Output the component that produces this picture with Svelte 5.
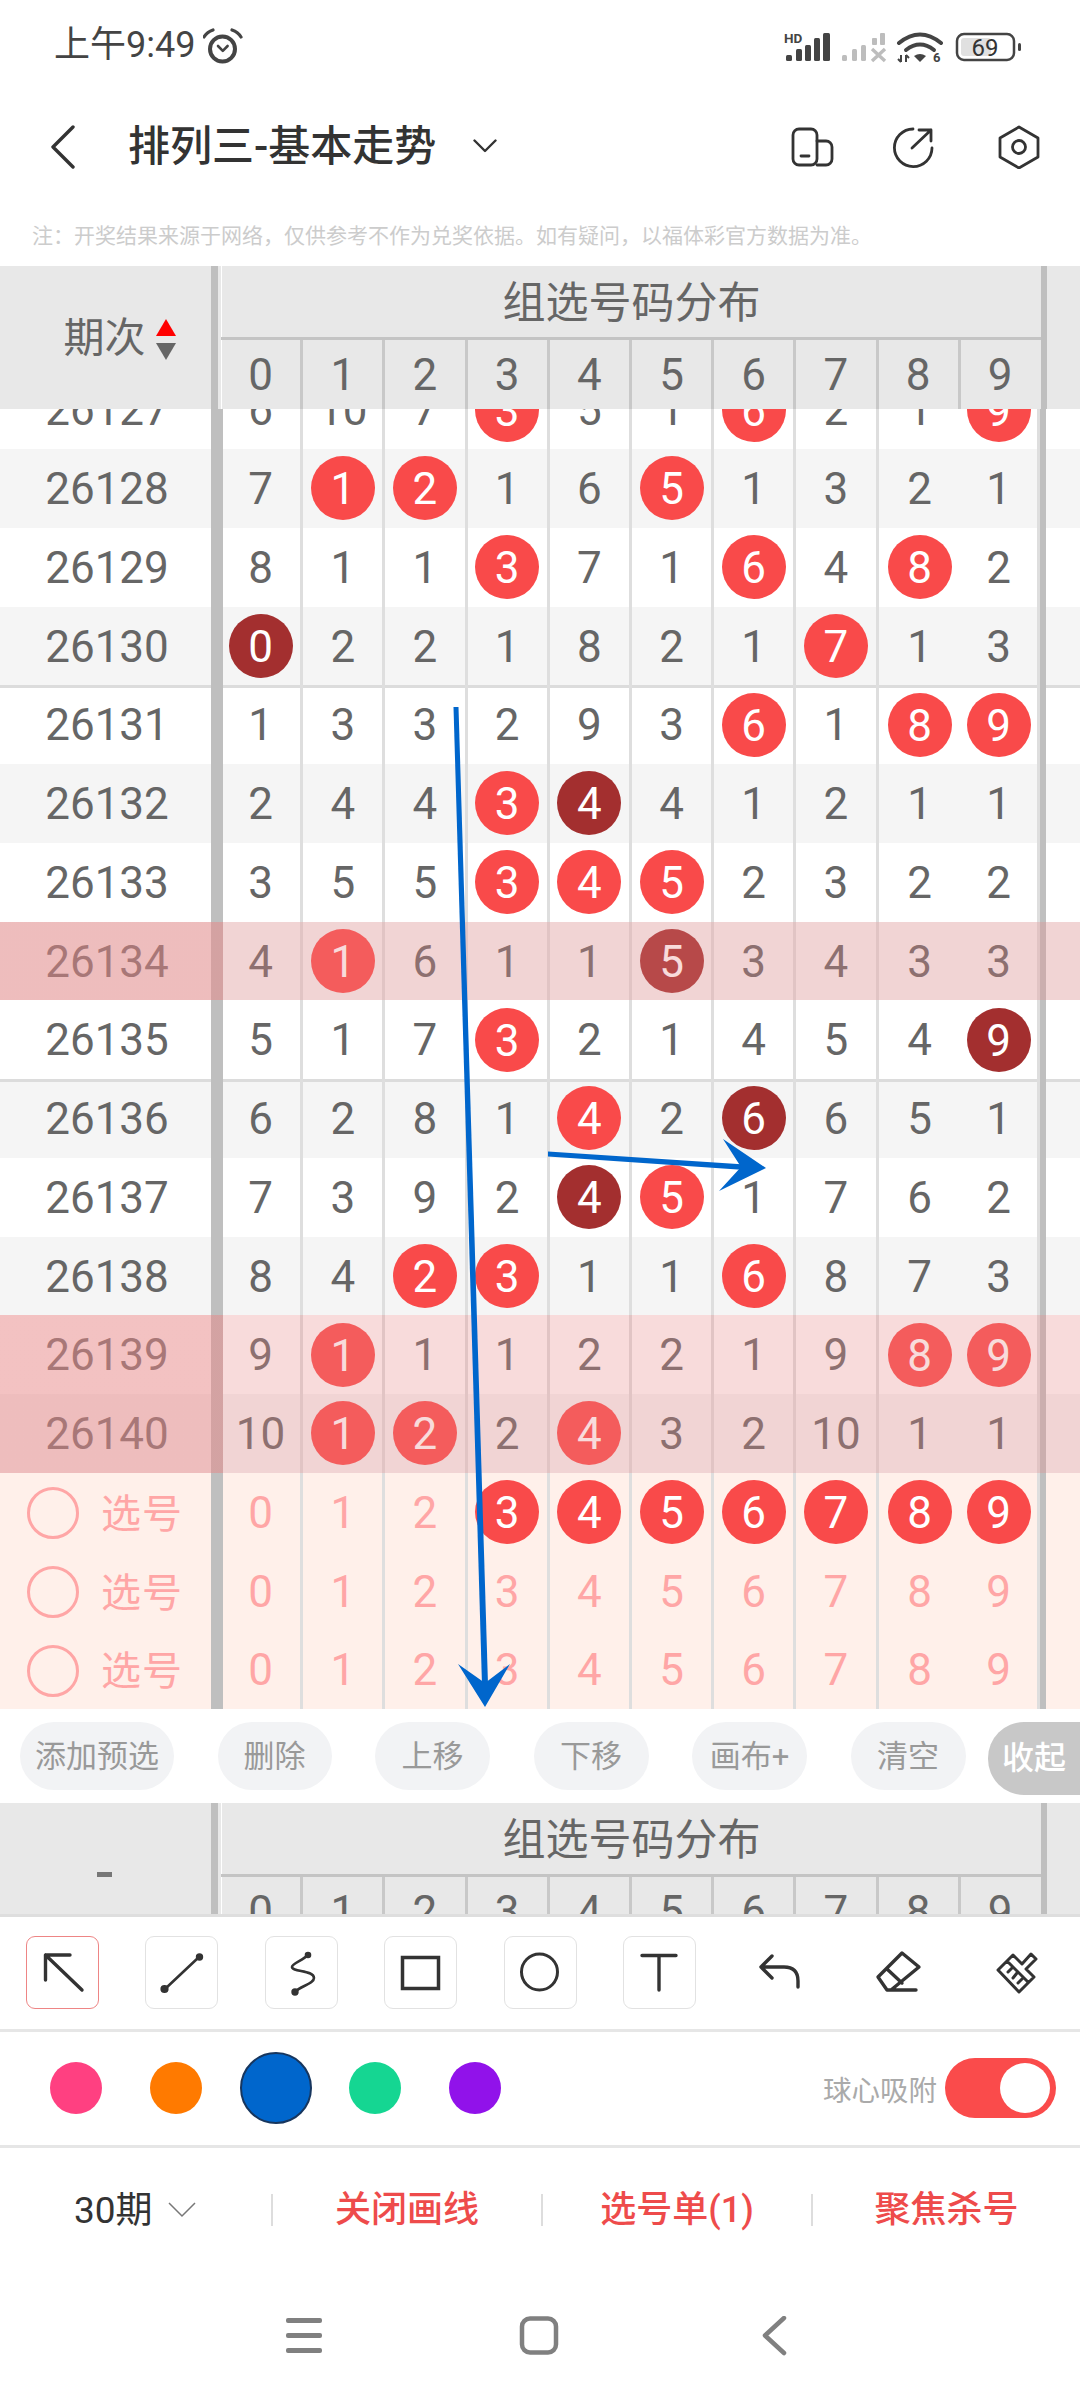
<script>
  const parse = (s) => s.split(' ').map((t) => {
    const m = t.match(/^(\d+)([rd]?)$/);
    return { v: m[1], b: m[2] };
  });
  const rows = [
    ['26127', '6 10 7 3r 5 1 6r 2 1 9r', ''],
    ['26128', '7 1r 2r 1 6 5r 1 3 2 1', ''],
    ['26129', '8 1 1 3r 7 1 6r 4 8r 2', ''],
    ['26130', '0d 2 2 1 8 2 1 7r 1 3', ''],
    ['26131', '1 3 3 2 9 3 6r 1 8r 9r', 'line'],
    ['26132', '2 4 4 3r 4d 4 1 2 1 1', ''],
    ['26133', '3 5 5 3r 4r 5r 2 3 2 2', ''],
    ['26134', '4 1r 6 1 1 5d 3 4 3 3', 'hl'],
    ['26135', '5 1 7 3r 2 1 4 5 4 9d', ''],
    ['26136', '6 2 8 1 4r 2 6d 6 5 1', 'line'],
    ['26137', '7 3 9 2 4d 5r 1 7 6 2', ''],
    ['26138', '8 4 2r 3r 1 1 6r 8 7 3', ''],
    ['26139', '9 1r 1 1 2 2 1 9 8r 9r', 'hl'],
    ['26140', '10 1r 2r 2 4r 3 2 10 1 1', 'hl']
  ].map(([id, cells, kind]) => ({ id, cells: parse(cells), kind }));
  const picks = [
    parse('0 1 2 3r 4r 5r 6r 7r 8r 9r'),
    parse('0 1 2 3 4 5 6 7 8 9'),
    parse('0 1 2 3 4 5 6 7 8 9')
  ];
  const digits = [0, 1, 2, 3, 4, 5, 6, 7, 8, 9];
  const pills = [['添加预选', 154], ['删除', 114], ['上移', 115], ['下移', 115], ['画布+', 115], ['清空', 115]];
  const swatches = [['#ff4081', false], ['#ff7a00', false], ['#0066cc', true], ['#15d692', false], ['#9112ea', false]];
</script>

{#snippet head(label)}
  <div class="thead">
    <div class="corner">
      {#if label}
        <span class="corner-label">期次</span>
        <span class="sort"><i class="up"></i><i class="down"></i></span>
      {:else}
        <span class="dash"></span>
      {/if}
    </div>
    <div class="gut"></div>
    <div class="hmid">
      <div class="htitle">组选号码分布</div>
      <div class="hdigits">
        {#each digits as d}<span class="hd">{d}</span>{/each}
      </div>
    </div>
    <div class="rbar"></div>
  </div>
{/snippet}

{#snippet cellrow(cells)}
  {#each cells as c}
    <div class="c">
      {#if c.b}<span class="ball {c.b}">{c.v}</span>{:else}{c.v}{/if}
    </div>
  {/each}
  <div class="rbar"></div>
{/snippet}

<div class="page">
  <div class="status">
    <span class="time">上午9:49</span>
    <svg class="alarm" width="40" height="36" viewBox="203 28 40 36" fill="none" stroke="#444">
      <circle cx="222.5" cy="49" r="12.5" stroke-width="4" />
      <path d="M218 46l4.8 4.8 4.8-4.8" stroke-width="2.6" stroke-linecap="round" stroke-linejoin="round" />
      <path d="M204 37q3-5 9-7M232 30q6 2 9 7" stroke-width="3.2" stroke-linecap="round" />
    </svg>
    <svg class="sys" width="240" height="36" viewBox="784 30 240 36">
      <text x="784" y="43" class="hdt">HD</text>
      <g fill="#444">
        <rect x="786" y="55" width="6" height="6" rx="1.5" /><rect x="796" y="49" width="6" height="12" rx="1.5" />
        <rect x="805" y="45" width="6" height="16" rx="1.5" /><rect x="814" y="38" width="6" height="23" rx="1.5" />
        <rect x="823" y="33" width="7" height="28" rx="1.5" />
      </g>
      <g fill="#bdbdbd">
        <rect x="842" y="55" width="5" height="6" rx="1.5" /><rect x="852" y="49" width="5" height="12" rx="1.5" />
        <rect x="861" y="45" width="5" height="16" rx="1.5" /><rect x="872" y="38" width="5" height="7" rx="1" />
        <rect x="880" y="33" width="5" height="12" rx="1" />
        <path d="M872 49l13 12M885 49l-13 12" stroke="#bdbdbd" stroke-width="3.4" fill="none" />
      </g>
      <g fill="none" stroke="#444" stroke-linecap="round">
        <path d="M899 43q21-17 42 0" stroke-width="4" />
        <path d="M906 50q14-11 28 0" stroke-width="4" />
      </g>
      <path d="M914 56q6-4 12 0l-6 6z" fill="#444" />
      <path d="M901 55v7M898 59l3 3M906 55v7M909 58l-3-3" stroke="#444" stroke-width="2" fill="none" />
      <text x="933" y="62" class="six">6</text>
      <rect x="957" y="34" width="57" height="26" rx="7" fill="none" stroke="#444" stroke-width="2.5" />
      <rect x="961" y="38" width="30" height="18" rx="3" fill="#e0e0e0" />
      <text x="985" y="56" class="bat">69</text>
      <rect x="1018" y="43" width="3" height="8" rx="1.5" fill="#444" />
    </svg>
  </div>

  <div class="appbar">
    <svg class="back" width="26" height="44" viewBox="0 0 26 44" fill="none" stroke="#333" stroke-width="3.4" stroke-linecap="round" stroke-linejoin="round">
      <path d="M23 2L3 22l20 20" />
    </svg>
    <span class="title">排列三-基本走势</span>
    <svg class="drop" width="24" height="14" viewBox="0 0 24 14" fill="none" stroke="#333" stroke-width="2.4" stroke-linecap="round" stroke-linejoin="round">
      <path d="M1.5 1.5L12 12 22.5 1.5" />
    </svg>
    <svg class="acts" width="250" height="44" viewBox="790 125 250 44" fill="none" stroke="#333" stroke-width="2.8" stroke-linecap="round" stroke-linejoin="round">
      <rect x="793" y="129" width="24" height="36" rx="6" />
      <path d="M817 141h9a6 6 0 0 1 6 6v12a6 6 0 0 1-6 6h-9" />
      <path d="M801 156h8" />
      <path d="M913 129a18.800 18.800 0 1 0 19 19" />
      <path d="M912 148l19-18M919 130h12v11" />
      <path d="M1019 127l19 11v19l-19 11-19-11v-19z" />
      <circle cx="1019" cy="147" r="6.500" />
    </svg>
  </div>

  <div class="note">注：开奖结果来源于网络，仅供参考不作为兑奖依据。如有疑问，以福体彩官方数据为准。</div>

  {@render head(true)}

  <div class="tbody">
    {#each rows as r, i}
      <div class="row {r.kind}" class:alt={i % 2 === 1} class:first={i === 0}>
        <div class="id">{r.id}</div>
        <div class="gut"></div>
        {@render cellrow(r.cells)}
      </div>
    {/each}
    {#each picks as p}
      <div class="row pick">
        <div class="id pickid"><i class="ring"></i><span>选号</span></div>
        <div class="gut"></div>
        {@render cellrow(p)}
      </div>
    {/each}
  </div>

  <div class="actions">
    {#each pills as [label, w]}
      <span class="pill" style="width:{w}px">{label}</span>
    {/each}
    <span class="fold">收起</span>
  </div>

  <div class="ghost">{@render head(false)}</div>

  <div class="tools">
    <div class="tool on">
      <svg viewBox="0 0 73 73" fill="none" stroke="#333" stroke-width="3.400" stroke-linecap="round" stroke-linejoin="round"><path d="M44 19H19.500V44M19.500 19L56 54" /></svg>
    </div>
    <div class="tool">
      <svg viewBox="0 0 73 73" fill="none" stroke="#333" stroke-width="2.600" stroke-linecap="round"><path d="M54 21L20 53" /><circle cx="54.500" cy="21" r="2.400" fill="#333" /><circle cx="19.500" cy="53" r="2.800" fill="#333" /></svg>
    </div>
    <div class="tool">
      <svg viewBox="0 0 73 73" fill="none" stroke="#333" stroke-width="2.600" stroke-linecap="round"><path d="M44 19C38 25 28 27 28 31C28 36 50 34 50 42C50 48 36 50 31 56" /><circle cx="44" cy="19" r="2" fill="#333" /><circle cx="31" cy="56" r="2.400" fill="#333" /></svg>
    </div>
    <div class="tool">
      <svg viewBox="0 0 73 73" fill="none" stroke="#333" stroke-width="3.500"><rect x="18.500" y="21.500" width="36" height="31" /></svg>
    </div>
    <div class="tool">
      <svg viewBox="0 0 73 73" fill="none" stroke="#333" stroke-width="3"><circle cx="36.500" cy="36" r="18" /></svg>
    </div>
    <div class="tool">
      <svg viewBox="0 0 73 73" fill="none" stroke="#333" stroke-width="3.400" stroke-linecap="round"><path d="M20 19.500H54M37 19.500V54" /></svg>
    </div>
    <div class="tool plain">
      <svg viewBox="743 1936 73 73" fill="none" stroke="#333" stroke-width="3.400" stroke-linecap="round" stroke-linejoin="round"><path d="M773 1956L762 1967L773 1978M762 1967H785Q799 1967 799 1981V1987" /></svg>
    </div>
    <div class="tool plain">
      <svg viewBox="863 1936 73 73" fill="none" stroke="#333" stroke-width="3.400" stroke-linecap="round" stroke-linejoin="round"><path d="M903 1953L920 1967L892 1990H888L879 1977zM888 1969L903 1983M892 1990H917" /></svg>
    </div>
    <div class="tool plain">
      <svg viewBox="983 1936 73 73" fill="none" stroke="#333" stroke-width="3" stroke-linecap="round" stroke-linejoin="round"><path d="M1015 1955L1024 1964L1033 1954L1038 1959L1028 1969L1036 1977L1021 1992L1000 1970zM1009 1961L1030 1982M1010 1972L1014 1968M1015 1978L1019 1973M1020 1983L1024 1979" /></svg>
    </div>
  </div>

  <div class="colors">
    {#each swatches as [c, big]}
      <div class="sw"><span class="dot" class:big style="background:{c}"></span></div>
    {/each}
    <span class="snap">球心吸附</span>
    <span class="toggle"><i></i></span>
  </div>

  <div class="bottom">
    <div class="b period">
      <span>30期</span>
      <svg width="28" height="16" viewBox="0 0 28 16" fill="none" stroke="#777" stroke-width="1.500"><path d="M1 1L14 14 27 1" /></svg>
    </div>
    <i class="sep"></i>
    <div class="b red">关闭画线</div>
    <i class="sep"></i>
    <div class="b red">选号单(1)</div>
    <i class="sep"></i>
    <div class="b red last">聚焦杀号</div>
  </div>

  <div class="nav">
    <svg width="40" height="40" viewBox="0 0 40 40" fill="#808080"><rect x="2" y="2" width="36" height="5" rx="2" /><rect x="2" y="17" width="36" height="5" rx="2" /><rect x="2" y="32" width="36" height="5" rx="2" /></svg>
    <svg width="40" height="40" viewBox="0 0 40 40" fill="none" stroke="#808080" stroke-width="4.500"><rect x="3" y="2.500" width="34" height="34" rx="8" /></svg>
    <svg width="40" height="40" viewBox="0 0 40 40" fill="none" stroke="#808080" stroke-width="4.500" stroke-linecap="round" stroke-linejoin="round"><path d="M30 2L11 19.500 30 37" /></svg>
  </div>

  <svg class="drawn" width="1080" height="2400" viewBox="0 0 1080 2400">
    <g fill="#0066cc">
      <path d="M453.500 707H458.500L488 1685H482z" />
      <path d="M485 1707L458 1664L485 1683L510 1664z" />
      <path d="M548 1151.500L745 1164.500V1170L548 1156.500z" />
      <path d="M766 1168L723 1139L741 1167L719 1191z" />
    </g>
  </svg>
</div>

<style>
  :global(body) { margin: 0; background: #fff; }
  .page {
    position: relative;
    width: 1080px;
    height: 2400px;
    overflow: hidden;
    background: #fff;
    color: #666;
    font-family: Roboto, "Noto Sans CJK SC", sans-serif;
  }
  .status { height: 92px; display: flex; align-items: center; padding: 0 0 0 54px; box-sizing: border-box; }
  .time { font-size: 36px; color: #444; line-height: 1; margin-top: -2px; width: 149px; white-space: nowrap; }
  .sys { margin-left: auto; margin-right: 56px; margin-top: 4px; }
  .hdt { font: 700 13.500px Roboto, sans-serif; fill: #444; }
  .six { font: 700 13px Roboto, sans-serif; fill: #444; }
  .bat { font: 400 24px Roboto, sans-serif; fill: #333; text-anchor: middle; }

  .appbar { height: 110px; display: flex; align-items: center; box-sizing: border-box; padding-left: 50px; }
  .back { margin-right: 52px; }
  .title { font-size: 42px; font-weight: 500; color: #333; white-space: nowrap; width: 345px; line-height: 1; }
  .drop { margin-top: -2px; }
  .acts { margin-left: auto; margin-right: 40px; }
  .note { height: 64px; padding-left: 32px; font-size: 21px; color: #ccc; line-height: 68px; white-space: nowrap; }

  .thead {
    display: grid;
    grid-template-columns: 211px 10px 820px 1fr;
    height: 143px;
    background: #e8e8e8;
  }
  .corner { display: flex; align-items: center; justify-content: center; padding-left: 28px; color: #666; }
  .corner-label { font-size: 41px; margin-right: 10px; line-height: 1; margin-top: 2px; }
  .sort { display: flex; flex-direction: column; gap: 7px; margin-top: 3px; }
  .sort i { display: block; width: 0; height: 0; border-left: 10px solid transparent; border-right: 10px solid transparent; }
  .up { border-bottom: 17px solid #f00; }
  .down { border-top: 17px solid #666; }
  .dash { display: block; width: 15px; height: 5px; background: #777; margin: 0 30px 0 0; }
  .thead > .gut { background: linear-gradient(90deg, #bfbfbf 7px, transparent 7px); width: 10px; }
  .hmid { display: flex; flex-direction: column; }
  .htitle { height: 71px; line-height: 74px; text-align: center; font-size: 43px; color: #666; border-left: 1px solid #fff; }
  .hdigits { display: grid; grid-template-columns: repeat(9, 82.2px) 79px; border-top: 3px solid #c4c4c4; height: 69px; }
  .hd { font-size: 44px; line-height: 71px; text-align: center; border-right: 3px solid #c8c8c8; }
  .hd:first-child { box-shadow: inset 1px 0 0 #fff; }
  .hd:last-child { border-right: 0; }
  .thead > .rbar { height: 143px; }
  .rbar { width: 6px; background: #bfbfbf; }

  .tbody { height: 1300px; overflow: hidden; }
  .row {
    position: relative;
    height: 78.750px;
    display: grid;
    grid-template-columns: 211px 10px repeat(9, 82.2px) 79px 6px 1fr;
    background: #fff;
  }
  .row.first { margin-top: -38.750px; }
  .row.alt { background: #f5f5f5; }
  .row.line { box-shadow: inset 0 3px 0 #dcdcdc; }
  .row.hl::after {
    content: "";
    position: absolute;
    inset: 0;
    background: linear-gradient(90deg, rgba(231, 136, 136, 0.3) 223px, transparent 223px) , rgba(231, 136, 136, 0.3);
  }
  .id { font-size: 44px; line-height: 81px; text-align: center; padding-left: 3px; }
  .row .gut { width: 12px; background: #bfbfbf; }
  .c {
    font-size: 44px;
    line-height: 81px;
    text-align: center;
    display: flex;
    align-items: flex-start;
    justify-content: center;
    border-right: 3px solid #dedede;
  }
  .c:nth-last-child(3) { border-right: 0; }
  .ball {
    width: 64px;
    height: 64px;
    margin-top: 7.400px;
    border-radius: 50%;
    line-height: 66px;
    color: #fff;
    flex: none;
  }
  .ball.r { background: #f94a4a; }
  .ball.d { background: #a32f2f; }
  .row.pick { background: #fff0ea; color: #ffa6a6; }
  .pickid { display: flex; align-items: center; text-align: left; padding-left: 27px; gap: 22px; }
  .pickid span { font-size: 40px; letter-spacing: 1px; line-height: 1; margin-top: 3px; }
  .ring { width: 52px; height: 52px; box-sizing: border-box; border: 3px solid #ffa6a6; border-radius: 50%; display: block; flex: none; }

  .actions { height: 94px; display: flex; align-items: flex-start; gap: 43.500px; padding: 13px 0 0 20px; box-sizing: border-box; }
  .pill { height: 68px; line-height: 70px; border-radius: 34px; background: #f2f3f5; color: #999; font-size: 31px; text-align: center; flex: none; }
  .fold { margin-left: -21.500px; width: 93px; height: 73px; line-height: 73px; border-radius: 36px 0 0 36px; background: #c8c8c8; color: #fff; font-size: 32px; font-weight: 500; text-align: center; flex: none; }

  .ghost { height: 114px; overflow: hidden; border-bottom: 3px solid #dedede; box-sizing: border-box; }

  .tools { height: 115px; display: flex; gap: 46.400px; padding: 19px 0 0 26px; box-sizing: border-box; border-bottom: 3px solid #e6e6e6; }
  .tool { width: 73px; height: 73px; box-sizing: border-box; border: 1.500px solid #e2e2e2; border-radius: 9px; flex: none; display: block; overflow: hidden; }
  .tool.on { border-color: #ee8585; }
  .tool.plain { border: 0; }
  .tool svg { display: block; width: 73px; height: 73px; margin: -1.500px; }
  .tool.plain svg { margin: 0; }

  .colors { height: 116px; display: flex; align-items: center; padding: 0 24px 1px 26.500px; box-sizing: border-box; border-bottom: 3px solid #e6e6e6; }
  .sw { width: 99.700px; display: flex; justify-content: center; flex: none; }
  .dot { width: 52px; height: 52px; border-radius: 50%; display: block; }
  .dot.big { width: 72px; height: 72px; box-sizing: border-box; border: 2px solid #17365e; }
  .snap { margin-left: auto; margin-right: 8px; font-size: 28.500px; color: #aaa; }
  .toggle { width: 111px; height: 60px; border-radius: 30px; background: #fa4b4b; box-sizing: border-box; padding: 5px 6px; display: flex; justify-content: flex-end; }
  .toggle i { width: 50px; height: 50px; border-radius: 50%; background: #fff; display: block; }

  .bottom { height: 124px; display: flex; align-items: center; }
  .b { font-size: 36px; text-align: center; line-height: 1; white-space: nowrap; }
  .period { width: 271px; box-sizing: border-box; padding-left: 74px; display: flex; align-items: center; color: #333; gap: 15px; }
  .period span { font-size: 37px; }
  .red { color: #ee4b4b; width: 268px; font-weight: 500; }
  .red.last { width: 267px; }
  .sep { width: 2px; height: 32px; background: #ddd; display: block; flex: none; }

  .nav { height: 128px; display: flex; align-items: center; justify-content: center; gap: 195px; padding-right: 2px; box-sizing: border-box; }

  .drawn { position: absolute; left: 0; top: 0; pointer-events: none; }
</style>
